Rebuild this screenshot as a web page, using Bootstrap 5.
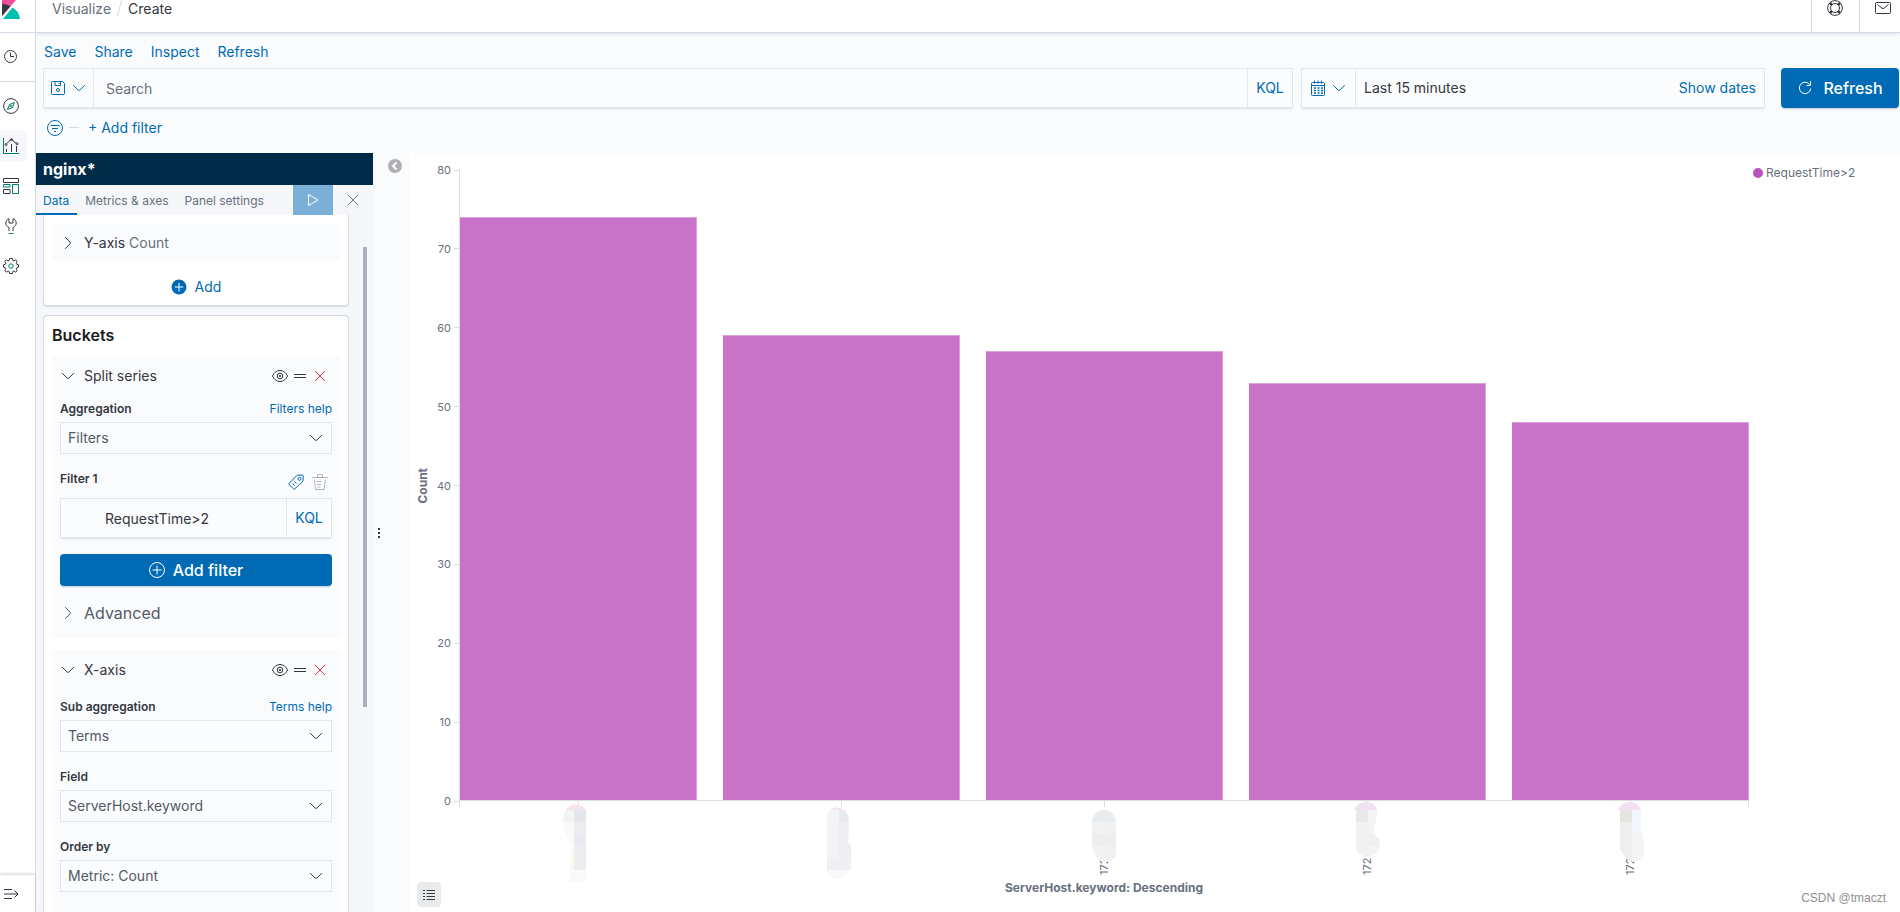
<!DOCTYPE html>
<html lang="en">
<head>
<meta charset="utf-8">
<meta name="viewport" content="width=device-width, initial-scale=1">
<title>Create - Visualize</title>
<link href="https://cdn.jsdelivr.net/npm/bootstrap@5.3.0/dist/css/bootstrap.min.css" rel="stylesheet">
<style>
:root{--k-blue:#006bb4;--k-line:#d3dae6;--k-soft:#e0e4ee;--k-ink:#343741;--k-sub:#69707d;--k-page:#fafbfd;--k-bar:#c873c8}
body{font-family:Inter,"Noto Sans","Liberation Sans",sans-serif;font-size:14px;line-height:20px;color:var(--k-ink);background:#fff}
a{color:var(--k-blue);text-decoration:none}
svg{display:block;flex:none}
.ic{width:16px;height:16px;fill:none;stroke:currentColor}
.ic .g{stroke:#017d73}
.plain{background:none;border:0;padding:0;color:inherit}
.tone-sub{color:var(--k-sub)}
.tone-blue{color:var(--k-blue)}
/* left rail */
.rail{width:36px;border-right:1px solid var(--k-line);background:#fff}
.rail-top{height:33px;border-bottom:1px solid var(--k-line);padding-left:2px}
.rail-recent{height:49px;border-bottom:1px solid var(--k-line);padding-left:3px}
.rail-nav{padding-top:8px;gap:8px}
.rail-nav a{color:var(--k-ink);height:32px;width:27px;padding-left:3px;border-radius:0 4px 4px 0}
.rail-nav a.active{background:#f5f7fa}
.rail-foot{height:37px;padding-left:3px;box-shadow:0 -1px 3px rgba(60,70,90,.25)}
/* top bar */
.topbar{height:33px;border-bottom:1px solid var(--k-line);box-shadow:0 1px 3px rgba(150,160,180,.3);padding-left:16px;background:#fff;position:relative}
.topbar .crumbs{line-height:17px;gap:8px}
.topbar .crumbs .sep{width:1px;height:16px;background:var(--k-line);transform:rotate(15deg)}
.top-btn{border-left:1px solid var(--k-line);width:48px;padding-left:15px}
.top-btn.last{width:41px}
/* query area */
.query{background:var(--k-page)}
.menu-row{padding:9px 8px 6px;gap:18px}
.query-row{padding:0 1px 0 7px}
.ctl{height:40px;border:1px solid var(--k-soft);border-radius:0;background:#fbfcfd;box-shadow:0 2px 2px -1px rgba(152,162,179,.3)}
.ctl>*+*{border-left:1px solid var(--k-soft)!important}
.ctl .noline{border-left:0!important}
.ctl-btn{color:var(--k-blue);gap:5px}
.ctl-btn.menu{width:53px}
.ctl-btn.lang{width:45px}
.ctl input{font-size:14px;background:transparent;border:0;border-radius:0;color:var(--k-ink);box-shadow:none;padding:0 12px}
.ctl input.inset{padding:0 44px;min-width:0}
.ctl input::placeholder{color:var(--k-sub);opacity:1}
.date-box{width:464px;margin:0 16px 0 8px}
.btn-k{background:var(--k-blue);color:#fff;font-size:16px;font-weight:500;border-radius:4px;border:0;box-shadow:0 2px 2px -1px rgba(54,97,126,.3)}
.btn-k:hover{background:#005c9c;color:#fff}
.btn-k.add{height:32px;margin-top:16px}
.btn-refresh{width:118px;height:40px;gap:10px}
.filter-row{height:39px;padding-left:11px;gap:6px;margin-bottom:6px}
.filter-row .dash{width:10px;height:1px;background:var(--k-line);margin-right:3px}
/* editor */
.editor{width:337px;background:#f5f7fa}
.editor-title{height:32px;background:#002b49;color:#fff;font-size:16px;font-weight:700;padding-left:7px}
.editor-tabs{height:30px;font-size:12px}
.editor-tabs .nav-link{padding:0 8px;color:var(--k-sub);border-bottom:2px solid transparent;line-height:31px;height:30px;border-radius:0}
.editor-tabs .nav-link.active{color:var(--k-blue);border-color:var(--k-blue);padding-left:7px}
.run{width:40px;height:30px;background:#7ab0d8;color:#fff}
.dismiss{width:40px;color:var(--k-sub)}
.editor-body{padding:0 4px 0 7px}
.panel{background:#fff;border:1px solid var(--k-line);border-radius:4px;box-shadow:0 2px 2px -1px rgba(152,162,179,.3);padding:0 8px}
.panel-metrics{border-top:0;border-radius:0 0 4px 4px;padding-top:9px;height:91px}
.panel-buckets{border-bottom:0;border-radius:4px 4px 0 0;margin-top:9px}
.panel h2{font-size:16px;font-weight:600;line-height:38px;margin:0 0 2px;color:#1a1c21}
.agg{background:var(--k-page);border-radius:4px}
.agg-head{height:37px;padding:0 8px;gap:8px}
.agg-split{height:282px;padding:1px 8px 0}
.agg-x{margin-top:12px;padding:1px 8px 60px}
.agg-split .agg-head,.agg-x .agg-head{padding:0 4px 0 0}
.tools{gap:4px}
.lbl{font-size:12px;font-weight:600;line-height:16px}
.help{font-size:12px;line-height:16px}
.lblrow{height:21px;margin-top:17px}
.lblrow.first{margin-top:7px}
.lblrow.sub{margin-top:11px}
.lblrow.tall{height:27px}
.lblrow .tools{gap:8px;padding:3px 4px 0 0}
.advanced{height:24px;margin-top:15px;font-size:16px;color:#535966}
.form-select.k{height:32px;border:1px solid var(--k-soft);border-radius:0;background-color:#fbfcfd;font-size:14px;line-height:20px;padding:5px 32px 5px 7px;color:#535966;
 background-image:url("data:image/svg+xml,%3Csvg xmlns='http://www.w3.org/2000/svg' viewBox='0 0 16 16'%3E%3Cpath fill='none' stroke='%23343741' stroke-linecap='round' d='M2.500 5.500l4.700 4.600q.8.700 1.600 0l4.700-4.600'/%3E%3C/svg%3E");background-size:16px 16px;background-position:right 7px center}
.scroll-col{width:6px;margin-left:14px}
.scroll-thumb{width:4px;height:460px;background:#abb0bc;margin-top:32px}
.gutter{width:36px;background:var(--k-page)}
.collapse-btn{margin:5px 0 0 7px}
.grip{padding:0 0 20px 4px}
/* chart */
.chart{padding:17px 0 0;color:var(--k-sub);font-size:12px}
.y-title{width:27px}
.vert{writing-mode:vertical-rl;transform:rotate(180deg);font-weight:700;line-height:16px}
.y-axis{width:23px;font-size:11px}
.y-axis div{height:0;gap:3px}
.y-axis i{width:5px;height:1px;background:#ddd}
.plot{border-left:1px solid #ddd;border-bottom:1px solid #ddd}
.bars,.x-axis{display:grid;grid-template-columns:repeat(5,minmax(0,1fr));column-gap:2%}
.bars div{background:var(--k-bar);border:1px solid #dba3db;border-bottom:0;border-left-color:var(--k-bar)}
.x-wrap{padding-left:50px}
.x-axis{height:77px;position:relative}
.x-axis::before,.x-axis::after{content:"";position:absolute;top:0;left:0;width:1px;height:6px;background:#ddd}
.x-axis::after{left:auto;right:0}
.x-axis svg{margin:0 auto;overflow:visible;font-size:11px}
.x-title{font-weight:700;line-height:20px;margin-bottom:14px}
.legend{width:151px;gap:3px;padding-left:4px;line-height:16px;margin-top:-5px}
.legend .dot{width:10px;height:10px;border-radius:50%;background:#bc52bc}
.legend-toggle{position:absolute;left:8px;bottom:5px;width:24px;height:25px;background:#e9eaec;border-radius:4px;color:var(--k-ink)}
.credit{position:absolute;right:14px;bottom:6px;font-family:"Liberation Sans",sans-serif;font-size:12px;line-height:16px;color:#909090}
</style>
</head>
<body>
<div class="d-flex vh-100 overflow-hidden">

  <nav class="rail d-flex flex-column flex-shrink-0" aria-label="Main">
    <div class="rail-top">
      <a href="#" aria-label="Kibana home"><svg width="20" height="20" viewBox="0 0 20 20"><path fill="#f04e98" d="M0 0h14L0 16z"/><path fill="#343741" d="M0 4C4 4 6.500 5 8.500 6.300L0 16z"/><path fill="#00bfb3" d="M10.500 7.500C15 10 17.500 14 18 19H1z"/></svg></a>
    </div>
    <div class="rail-recent d-flex align-items-center">
      <a href="#" class="text-reset" aria-label="Recently viewed"><svg class="ic" viewBox="0 0 16 16"><circle cx="7.500" cy="7.500" r="6"/><path d="M7.500 3.500v4h3.500"/></svg></a>
    </div>
    <div class="rail-nav d-flex flex-column flex-grow-1">
      <a href="#" class="d-flex align-items-center" aria-label="Discover"><svg class="ic" viewBox="0 0 16 16"><circle cx="8" cy="8" r="7.400"/><path class="g" d="M11.500 4.500l-2 5-5 2 2-5z"/><circle class="g" cx="8" cy="8" r=".7"/></svg></a>
      <a href="#" class="d-flex align-items-center active" aria-label="Visualize"><svg class="ic" viewBox="0 0 16 16"><path class="g" d="M.5 0v15.500H16"/><path d="M3.500 11v3M8.500 6v8M13.500 8v6M3.800 5.500l4-4 1 0 4.500 4"/><circle cx="3" cy="6.500" r="1"/><circle cx="8.500" cy="1.700" r="1"/><circle cx="14" cy="5.800" r="1"/></svg></a>
      <a href="#" class="d-flex align-items-center" aria-label="Dashboard"><svg class="ic" viewBox="0 0 16 16"><path d="M.5.500h15v4H.500zM.5 11.500h6.500v4H.500z"/><path class="g" d="M.5 9V6.500H7V9zM9.500 6.500h6v9h-6z"/></svg></a>
      <a href="#" class="d-flex align-items-center" aria-label="Dev Tools"><svg class="ic" viewBox="0 0 16 16"><path d="M6 13V9.500C4 8.700 2.800 7 2.800 5S4 1.300 6 .700V5h4V.700C12 1.300 13.200 3 13.200 5S12 8.700 10 9.500V13"/><path class="g" d="M5.500 15.500h5"/></svg></a>
      <a href="#" class="d-flex align-items-center" aria-label="Management"><svg class="ic" viewBox="0 0 16 16"><path d="M6.600.5h2.800l.4 2 1.200.5 1.700-1.200 1.500 1.600-1 1.700.6 1.300 1.700.4v2.400l-1.700.4-.6 1.300 1 1.700-1.500 1.600L11 13l-1.200.5-.4 2H6.600l-.4-2L5 13l-1.700 1.200-1.500-1.600 1-1.700-.6-1.300-1.700-.4V6.800l1.700-.4.600-1.300-1-1.700 1.500-1.600L5 3l1.200-.5z"/><circle class="g" cx="8" cy="8" r="2.200"/></svg></a>
    </div>
    <div class="rail-foot d-flex align-items-center"><button class="plain" aria-label="Expand menu"><svg class="ic" viewBox="0 0 16 16"><path d="M1 3.500h8M1 8h14M1 12.500h8M11.500 4.500l3.500 3.500-3.500 3.500"/></svg></button></div>
  </nav>

  <div class="d-flex flex-column flex-grow-1 overflow-hidden">
    <header class="topbar d-flex flex-shrink-0">
      <div class="crumbs d-flex align-items-start flex-grow-1"><a href="#" class="tone-sub">Visualize</a><span class="sep"></span><span>Create</span></div>
      <button class="plain top-btn d-flex" aria-label="Help"><svg class="ic" viewBox="0 0 16 16"><circle cx="8" cy="8" r="7.400"/><circle cx="8" cy="8" r="4.500"/><path stroke-width="2.500" d="M2.900 2.900l2 2M13.100 2.900l-2 2M2.900 13.100l2-2M13.100 13.100l-2-2"/></svg></button>
      <button class="plain top-btn last d-flex" aria-label="News"><svg class="ic" viewBox="0 0 16 16"><rect x=".5" y="2.500" width="15" height="11" rx="1"/><path d="M2.500 4.500l4.500 3.700q1 .8 2 0l4.500-3.700"/></svg></button>
    </header>

    <section class="query flex-shrink-0">
      <div class="menu-row d-flex"><a href="#">Save</a><a href="#">Share</a><a href="#">Inspect</a><a href="#">Refresh</a></div>
      <form class="query-row d-flex" onsubmit="return false">
        <div class="ctl d-flex flex-grow-1">
          <button type="button" class="plain ctl-btn menu d-flex align-items-center justify-content-center" aria-label="Saved queries"><svg class="ic" viewBox="0 0 16 16"><path d="M1.500 2.500q0-1 1-1h10l2 2v10q0 1-1 1h-11q-1 0-1-1zM5 1.500v4h5.500v-4M9 3v1"/><circle cx="8" cy="10" r="1.500"/></svg><svg class="ic" viewBox="0 0 16 16"><path stroke-linecap="round" d="M2.500 5.500l4.700 4.600q.8.700 1.600 0l4.700-4.600"/></svg></button>
          <input class="form-control flex-grow-1" type="text" placeholder="Search" aria-label="Search">
          <button type="button" class="plain ctl-btn lang flex-shrink-0">KQL</button>
        </div>
        <div class="ctl date-box d-flex">
          <button type="button" class="plain ctl-btn menu d-flex align-items-center justify-content-center" aria-label="Quick select"><svg class="ic" viewBox="0 0 16 16"><path d="M2.500 2.500h11q1 0 1 1v11q0 1-1 1h-11q-1 0-1-1v-11q0-1 1-1zM1.500 5.500h13M4.500.5v3M8 .5v3M11.500.5v3"/><path stroke-dasharray="2 1.500" stroke-width="1.500" d="M4 8h9M4 10.500h9M4 13h9"/></svg><svg class="ic" viewBox="0 0 16 16"><path stroke-linecap="round" d="M2.500 5.500l4.700 4.600q.8.700 1.600 0l4.700-4.600"/></svg></button>
          <button type="button" class="plain flex-grow-1 text-start ps-2">Last 15 minutes</button>
          <button type="button" class="plain noline ctl-btn pe-2">Show dates</button>
        </div>
        <button class="btn btn-k btn-refresh d-flex align-items-center justify-content-center p-0"><svg class="ic" viewBox="0 0 16 16"><path d="M12.800 4.800A5.700 5.700 0 1 0 13.700 8.500M13.500 1v4.500H9.500"/></svg>Refresh</button>
      </form>
      <div class="filter-row d-flex align-items-center">
        <button class="plain tone-blue" aria-label="Filter options"><svg class="ic" viewBox="0 0 16 16"><circle cx="8" cy="8" r="7.500"/><path d="M3.500 5.500h9M5 8.500h6M7 11.500h2"/></svg></button>
        <span class="dash"></span>
        <button class="plain tone-blue">+ Add filter</button>
      </div>
    </section>

    <main class="d-flex flex-grow-1 overflow-hidden">
      <aside class="editor d-flex flex-column flex-shrink-0">
        <div class="editor-title d-flex align-items-center flex-shrink-0">nginx*</div>
        <div class="editor-tabs d-flex flex-shrink-0">
          <nav class="nav flex-grow-1 flex-nowrap"><a class="nav-link active" href="#">Data</a><a class="nav-link" href="#">Metrics &amp; axes</a><a class="nav-link" href="#">Panel settings</a></nav>
          <button class="plain run d-flex align-items-center justify-content-center" aria-label="Apply changes"><svg class="ic" viewBox="0 0 16 16"><path stroke-linejoin="round" d="M3.500 2.500v11l9.500-5.500z"/></svg></button>
          <button class="plain dismiss d-flex align-items-center justify-content-center" aria-label="Discard changes"><svg class="ic" viewBox="0 0 16 16"><path d="M3 3l10 10M13 3L3 13"/></svg></button>
        </div>
        <div class="editor-body d-flex flex-grow-1 overflow-hidden">
          <div class="flex-grow-1">
            <section class="panel panel-metrics">
              <div class="agg agg-head d-flex align-items-center"><svg class="ic" viewBox="0 0 16 16"><path stroke-linecap="round" d="M5.500 2.500l4.600 4.700q.7.800 0 1.600l-4.600 4.700"/></svg><span>Y-axis <span class="tone-sub">Count</span></span></div>
              <div class="d-flex justify-content-center pt-3"><button class="plain tone-blue d-flex align-items-center gap-2"><svg width="16" height="16" viewBox="0 0 16 16"><circle cx="8" cy="8" r="7.500" fill="#006bb4"/><path stroke="#fff" d="M8 4v8.500M3.800 8h8.500"/></svg>Add</button></div>
            </section>
            <section class="panel panel-buckets">
              <h2>Buckets</h2>
              <div class="agg agg-split">
                <div class="agg-head d-flex align-items-center"><svg class="ic" viewBox="0 0 16 16"><path stroke-linecap="round" d="M2.500 5.500l4.700 4.600q.8.700 1.600 0l4.700-4.600"/></svg><span class="flex-grow-1">Split series</span>
                  <span class="tools d-flex"><svg class="ic" viewBox="0 0 16 16"><path d="M.5 8C2 4.500 4.500 2.500 8 2.500S14 4.500 15.500 8C14 11.500 11.500 13.500 8 13.500S2 11.500.5 8z"/><circle cx="8" cy="8" r="2.800"/><circle cx="8" cy="8" r=".8"/></svg><svg class="ic" viewBox="0 0 16 16"><path d="M2 6.500h12M2 9.500h12"/></svg><svg class="ic text-danger" viewBox="0 0 16 16"><path d="M3 3l10 10M13 3L3 13"/></svg></span></div>
                <div class="lblrow first d-flex justify-content-between"><label class="lbl" for="agg1">Aggregation</label><a class="help" href="#">Filters help</a></div>
                <select id="agg1" class="form-select k"><option>Filters</option></select>
                <div class="lblrow tall d-flex justify-content-between"><label class="lbl" for="f1">Filter 1</label><span class="tools d-flex"><svg class="ic tone-blue" viewBox="0 0 16 16"><path stroke-linejoin="round" d="M1 9.500l8-8.200 5.500-.3q.7 0 .7.700L15 7l-8.300 8q-.5.300-1 0L1 10.500q-.4-.5 0-1z"/><circle cx="11.500" cy="4.800" r="1.500"/><path d="M4.500 9.500l2 2M6.500 7.500l2 2"/></svg><svg class="ic" viewBox="0 0 16 16" stroke-opacity=".35"><path d="M0 3.500h16M5.500 3.500v-3h5v3M2.500 5.500l1 10h8.500l1.500-10M4.500 7.500h5M5 10.500h4M5.500 13h3"/></svg></span></div>
                <div class="ctl d-flex"><input id="f1" class="form-control inset flex-grow-1" value="RequestTime&gt;2"><button class="plain ctl-btn lang flex-shrink-0">KQL</button></div>
                <button class="btn btn-k add w-100 d-flex align-items-center justify-content-center p-0 gap-2"><svg class="ic" viewBox="0 0 16 16"><circle cx="8" cy="8" r="7.500"/><path d="M8 3.500v9M3.500 8h9"/></svg>Add filter</button>
                <button class="plain advanced d-flex align-items-center gap-2"><svg class="ic" viewBox="0 0 16 16"><path stroke-linecap="round" d="M5.500 2.500l4.600 4.700q.7.800 0 1.600l-4.600 4.700"/></svg>Advanced</button>
              </div>
              <div class="agg agg-x">
                <div class="agg-head d-flex align-items-center"><svg class="ic" viewBox="0 0 16 16"><path stroke-linecap="round" d="M2.500 5.500l4.700 4.600q.8.700 1.600 0l4.700-4.600"/></svg><span class="flex-grow-1">X-axis</span>
                  <span class="tools d-flex"><svg class="ic" viewBox="0 0 16 16"><path d="M.5 8C2 4.500 4.500 2.500 8 2.500S14 4.500 15.500 8C14 11.500 11.500 13.500 8 13.500S2 11.500.5 8z"/><circle cx="8" cy="8" r="2.800"/><circle cx="8" cy="8" r=".8"/></svg><svg class="ic" viewBox="0 0 16 16"><path d="M2 6.500h12M2 9.500h12"/></svg><svg class="ic text-danger" viewBox="0 0 16 16"><path d="M3 3l10 10M13 3L3 13"/></svg></span></div>
                <div class="lblrow sub d-flex justify-content-between"><label class="lbl" for="agg2">Sub aggregation</label><a class="help" href="#">Terms help</a></div>
                <select id="agg2" class="form-select k"><option>Terms</option></select>
                <div class="lblrow d-flex"><label class="lbl" for="fld">Field</label></div>
                <select id="fld" class="form-select k"><option>ServerHost.keyword</option></select>
                <div class="lblrow d-flex"><label class="lbl" for="ord">Order by</label></div>
                <select id="ord" class="form-select k"><option>Metric: Count</option></select>
              </div>
            </section>
          </div>
          <div class="scroll-col flex-shrink-0"><div class="scroll-thumb"></div></div>
        </div>
      </aside>

      <div class="gutter d-flex flex-column flex-shrink-0">
        <button class="plain collapse-btn align-self-center" aria-label="Collapse editor"><svg width="16" height="16" viewBox="0 0 16 16"><circle cx="8" cy="8" r="7" fill="#afb0b3"/><path d="M9.500 4.500L6 8l3.500 3.500" fill="none" stroke="#fff" stroke-width="2"/></svg></button>
        <div class="grip d-flex flex-column justify-content-center flex-grow-1"><svg width="4" height="12" viewBox="0 0 4 12"><path fill="#343741" d="M1 1h2v2H1zM1 5h2v2H1zM1 9h2v2H1z"/></svg></div>
      </div>

      <section class="chart d-flex flex-grow-1 position-relative" aria-label="Count by ServerHost.keyword">
        <div class="d-flex flex-column flex-grow-1">
          <div class="d-flex flex-grow-1">
            <div class="y-title d-flex align-items-center justify-content-center"><span class="vert">Count</span></div>
            <div class="y-axis d-flex flex-column justify-content-between">
              <div class="d-flex align-items-center justify-content-end">80<i></i></div><div class="d-flex align-items-center justify-content-end">70<i></i></div><div class="d-flex align-items-center justify-content-end">60<i></i></div><div class="d-flex align-items-center justify-content-end">50<i></i></div><div class="d-flex align-items-center justify-content-end">40<i></i></div><div class="d-flex align-items-center justify-content-end">30<i></i></div><div class="d-flex align-items-center justify-content-end">20<i></i></div><div class="d-flex align-items-center justify-content-end">10<i></i></div><div class="d-flex align-items-center justify-content-end">0<i></i></div>
            </div>
            <div class="plot bars flex-grow-1 align-items-end">
              <div style="height:92.500%"></div><div style="height:73.750%"></div><div style="height:71.250%"></div><div style="height:66.250%"></div><div style="height:60%"></div>
            </div>
          </div>
          <div class="x-wrap">
            <div class="x-axis">
              <svg width="40" height="76" viewBox="0 0 40 76"><path stroke="#ddd" d="M20.500 0v6"/><clipPath id="b1"><path d="M8 9q3-5 9-5.500 7 0 11 5.500v72H12V69l1-15V44L6 28q-3-10 2-19z"/></clipPath><g clip-path="url(#b1)"><path fill="#f8f9f9" d="M0 0h30v82H0z"/><path fill="#f3f3f4" d="M4 9h12v12H4z"/><path fill="#ecedf1" d="M16 9h12v60H16z"/><path fill="#e5e6ea" d="M16 9h12v12H16z"/><path fill="#e9eaef" d="M16 33h12v12H16z"/><path fill="#f2e2f2" d="M4 0h26v9H4z"/><path fill="#fbf8dc" d="M13 50h2v18h-2z"/></g></svg>
              <svg width="40" height="76" viewBox="0 0 40 76"><path stroke="#ddd" d="M20.500 0v6"/><clipPath id="b2"><path d="M6 12q5-6 10-5.500 12 1 12 16l-1 20 3 2v22q-5 11-13 11-7 0-11-5z"/></clipPath><g clip-path="url(#b2)"><path fill="#f4f4f4" d="M4 0h28v82H4z"/><path fill="#edeef2" d="M18 9h14v48H18z"/><path fill="#e8e9ed" d="M18 9h12v12H18z"/><path fill="#f0f0f2" d="M4 57h28v12H4z"/><path fill="#f8f9fa" d="M4 69h28v12H4z"/><path fill="#f2e2f2" d="M4 0h28v9H4z"/></g></svg>
              <svg width="40" height="76" viewBox="0 0 40 76"><path stroke="#ddd" d="M20.500 0v6"/><text x="-74" y="24" transform="rotate(-90)" fill="#69707d">172</text><clipPath id="b3"><path d="M8 20q2-11 12-11 9 0 12 11v35q-5 7-12 6Q10 59 8 43z"/></clipPath><g clip-path="url(#b3)"><path fill="#f2f2f2" d="M6 8h14v54H6z"/><path fill="#eff1f3" d="M20 8h14v54H20z"/><path fill="#e9ecee" d="M6 8h28v13H6z"/><path fill="#eeeeef" d="M6 33h28v12H6z"/></g></svg>
              <svg width="40" height="76" viewBox="0 0 40 76"><path stroke="#ddd" d="M20.500 0v3"/><text x="-74" y="24" transform="rotate(-90)" fill="#69707d">172</text><clipPath id="b4"><path d="M7 9Q11 1 19 1q9 0 11 8 1 7-3 16-1 8 5 13 3 11-5 16-7 4-13 0l-5-4V9z"/></clipPath><g clip-path="url(#b4)"><path fill="#f1f1f1" d="M5 0h16v62H5z"/><path fill="#f3f4f6" d="M21 0h14v62H21z"/><path fill="#e9e9e9" d="M5 9h16v12H5z"/><path fill="#eff0f2" d="M9 33h26v12H9z"/><path fill="#f1e1f1" d="M5 0h26v9H5z"/></g></svg>
              <svg width="40" height="76" viewBox="0 0 40 76"><path stroke="#ddd" d="M20.500 0v3"/><text x="-74" y="24" transform="rotate(-90)" fill="#69707d">172</text><clipPath id="b5"><path d="M8 9q4-8 11-8 9 0 12 8v20l3 12v15q-4 5-11 5-8-2-13-13V9z"/></clipPath><g clip-path="url(#b5)"><path fill="#eeefef" d="M5 0h17v62H5z"/><path fill="#f4f5f7" d="M22 0h14v62H22z"/><path fill="#e5e5e2" d="M5 9h17v12H5z"/><path fill="#f3f7fc" d="M22 9h14v22H22z"/><path fill="#f1e1f1" d="M5 0h28v9H5z"/></g></svg>
            </div>
            <div class="x-title text-center">ServerHost.keyword: Descending</div>
          </div>
        </div>
        <div class="legend d-flex align-items-center align-self-start"><span class="dot"></span>RequestTime&gt;2</div>
        <button class="plain legend-toggle d-flex align-items-center justify-content-center" aria-label="Toggle legend"><svg class="ic" viewBox="0 0 16 16"><path d="M2 3.500h2M5.500 3.500H14M2 6.500h2M5.500 6.500H14M2 9.500h2M5.500 9.500H14M2 12.500h2M5.500 12.500H14"/></svg></button>
        <span class="credit">CSDN @tmaczt</span>
      </section>
    </main>
  </div>
</div>
<script src="https://cdn.jsdelivr.net/npm/bootstrap@5.3.0/dist/js/bootstrap.bundle.min.js"></script>
</body>
</html>
